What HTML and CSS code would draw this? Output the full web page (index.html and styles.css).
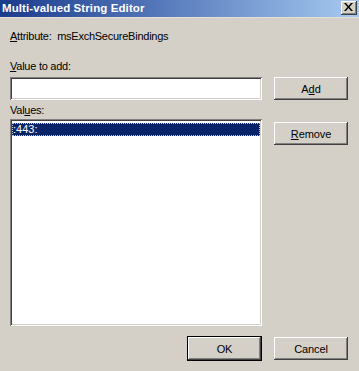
FILE: index.html
```html
<!DOCTYPE html>
<html>
<head>
<meta charset="utf-8">
<link rel="stylesheet" href="styles.css">
</head>
<body>
<div class="window">
  <div class="titlebar">
    <span class="title">Multi-valued String Editor</span>
    <button class="close" aria-label="Close">
      <svg width="9" height="8" viewBox="0 0 9 8"><path d="M0 0h2l2.5 3 2.5-3h2L5.5 4 9 8H7L4.5 5 2 8H0l3.5-4z" fill="#000"/></svg>
    </button>
  </div>
  <div class="content">
    <div class="label attr"><u>A</u>ttribute:&nbsp; msExchSecureBindings</div>
    <div class="label addlabel"><u>V</u>alue to add:</div>
    <div class="row">
      <div class="input"></div>
      <button class="btn">A<u>d</u>d</button>
    </div>
    <div class="label valueslabel">Val<u>u</u>es:</div>
    <div class="row listrow">
      <div class="list">
        <div class="item selected">:443:</div>
      </div>
      <button class="btn remove"><u>R</u>emove</button>
    </div>
    <div class="footer">
      <button class="btn default">OK</button>
      <button class="btn">Cancel</button>
    </div>
  </div>
</div>
</body>
</html>
```
FILE: styles.css
```css
* { box-sizing: border-box; }
html, body { margin: 0; padding: 0; }
body {
  width: 359px;
  height: 371px;
  overflow: hidden;
  font-family: "Liberation Sans", Arial, sans-serif;
  font-size: 11px;
  color: #000;
  background: #d4d0c8;
}
.window {
  width: 359px;
  height: 371px;
  background: #d4d0c8;
  display: flex;
  flex-direction: column;
}
.titlebar {
  height: 18px;
  background: linear-gradient(to right, #1b3b8c 0%, #4f72b6 40%, #a6caf0 100%);
  display: flex;
  align-items: center;
  justify-content: space-between;
  padding: 0 2px 0 2px;
  border-bottom: 1px solid #e4e0d8;
}
.title {
  color: #fff;
  font-weight: bold;
  font-size: 11.5px;
  letter-spacing: 0.1px;
  padding-bottom: 1px;
}
.close {
  width: 16px;
  height: 14px;
  margin-top: -2px;
  padding: 0;
  border: 0;
  background: #d4d0c8;
  box-shadow: inset -1px -1px #404040, inset 1px 1px #fff, inset -2px -2px #808080, inset 2px 2px #d4d0c8;
  display: flex;
  align-items: center;
  justify-content: center;
}
.close svg { display: block; margin-left: -1px; margin-top: -1px; }
.content {
  padding-left: 10px;
  display: flex;
  flex-direction: column;
}
.label {
  height: 13px;
  line-height: 13px;
  white-space: nowrap;
  letter-spacing: -0.25px;
}
.attr { margin-top: 12px; }
.addlabel { margin-top: 17px; }
.row {
  display: flex;
  gap: 12px;
  margin-top: 4px;
}
.input {
  width: 252px;
  height: 23px;
  background: #fff;
  box-shadow: inset 1px 1px #808080, inset -1px -1px #fff, inset 2px 2px #404040, inset -2px -2px #d4d0c8;
}
.btn {
  width: 74px;
  height: 23px;
  padding: 0;
  border: 0;
  background: #d4d0c8;
  font-family: "Liberation Sans", Arial, sans-serif;
  font-size: 11px;
  letter-spacing: -0.1px;
  color: #000;
  box-shadow: inset -1px -1px #404040, inset 1px 1px #fff, inset -2px -2px #808080, inset 2px 2px #d4d0c8;
}
.valueslabel { margin-top: 4px; }
.listrow { margin-top: 2px; align-items: flex-start; }
.list {
  width: 252px;
  height: 207px;
  background: #fff;
  padding: 4px 2px 2px 2px;
  box-shadow: inset 1px 1px #808080, inset -1px -1px #fff, inset 2px 2px #404040, inset -2px -2px #d4d0c8;
}
.item {
  height: 13px;
  line-height: 12px;
  padding-left: 1px;
  white-space: nowrap;
}
.item.selected {
  background: #0a246a;
  color: #fff;
  outline: 1px dotted #c8c8c8;
  outline-offset: -1px;
}
.remove { margin-top: 3px; }
.footer {
  display: flex;
  justify-content: flex-end;
  align-items: flex-start;
  gap: 12px;
  padding-right: 11px;
  margin-top: 11px;
}
.btn.default {
  width: 75px;
  height: 25px;
  margin-top: -1px;
  box-shadow: inset 0 0 0 1px #000, inset -2px -2px #404040, inset 2px 2px #fff, inset -3px -3px #808080;
}
```
